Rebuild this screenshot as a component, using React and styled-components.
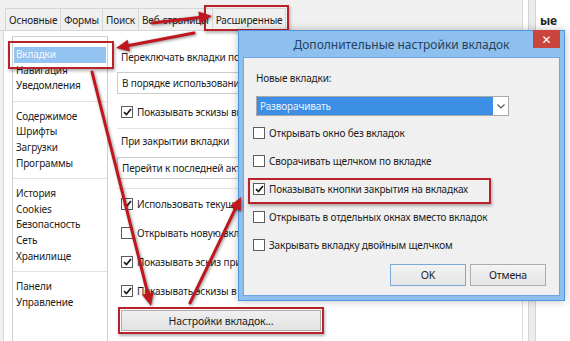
import React from 'react'
import styled, { createGlobalStyle } from 'styled-components'

const Global = createGlobalStyle`
  body { margin: 0; background: #fff; }
`

const RED = '#b8222a'

const Page = styled.div`
  position: relative;
  width: 570px;
  height: 341px;
  overflow: hidden;
  display: flex;
  background: #fff;
  font-family: "Noto Sans", "DejaVu Sans", sans-serif;
  font-size: 10px;
  letter-spacing: -0.15px;
  color: #1c1c1c;
`

const Window = styled.div`
  display: flex;
  width: 540px;
  height: 100%;
  background: #f0f0f0;
`

const Main = styled.div`
  display: flex;
  flex-direction: column;
  width: 523px;
`

const TabStrip = styled.div`
  display: flex;
  align-items: flex-end;
  height: 31px;
  padding-left: 5px;
  border-bottom: 1px solid #d6d6d6;
  box-sizing: border-box;
`

const Tab = styled.div`
  position: relative;
  display: flex;
  align-items: center;
  height: ${p => (p.$active ? 25 : 21)}px;
  padding: 0 ${p => (p.$active ? 9 : 3)}px;
  margin-left: ${p => (p.$active ? 3 : 0)}px;
  margin-bottom: ${p => (p.$active ? -1 : 0)}px;
  border: 1px solid #d6d6d6;
  border-bottom: none;
  margin-right: -1px;
  background: ${p => (p.$active ? '#fff' : '#f0f0f0')};
  font-size: ${p => (p.$active ? 10.5 : 10)}px;
`

const Marked = styled.div`
  position: relative;
  margin-top: ${p => p.$mt || 0}px;
  margin-left: ${p => p.$ml || 0}px;
  &::after {
    content: '';
    position: absolute;
    inset: ${p => p.$inset};
    border: 2px solid ${RED};
    box-shadow: 1px 2px 3px rgba(0, 0, 0, 0.3);
    pointer-events: none;
  }
`

const TabPage = styled.div`
  flex: 1;
  display: flex;
  min-height: 0;
  margin-left: 3px;
  padding: 5px 0 0 8px;
  background: #fff;
  border-left: 1px solid #d6d6d6;
`

const Sidebar = styled.div`
  width: 96px;
  padding-top: 10px;
  border: 1px solid #cfcfcf;
  border-bottom: none;
  box-sizing: border-box;
`

const Group = styled.div`
  padding: 0 1px 7px;
  border-bottom: 1px solid #e2e2e2;
  & + & { padding-top: 7px; }
  &:last-child { border-bottom: none; }
`

const Item = styled.div`
  height: 15.6px;
  line-height: 15.6px;
  padding-left: 2px;
  background: ${p => (p.$selected ? '#93c3f1' : 'transparent')};
  color: ${p => (p.$selected ? '#f5f9fd' : 'inherit')};
`

const Content = styled.div`
  flex: 1;
  display: flex;
  flex-direction: column;
  padding-left: 9px;
`

const Label = styled.div`
  height: 16px;
  line-height: 16px;
  padding-left: ${p => (p.$flush ? 0 : 4)}px;
  margin-top: ${p => p.$mt || 0}px;
  white-space: nowrap;
`

const Select = styled.div`
  display: flex;
  align-items: center;
  width: ${p => p.$w}px;
  height: ${p => p.$h}px;
  margin-top: ${p => p.$mt}px;
  padding-left: 4px;
  border: 1px solid #cbcbcb;
  background: #fff;
  box-sizing: border-box;
  white-space: nowrap;
`

const Separator = styled.div`
  height: 1px;
  width: 320px;
  margin-top: ${p => p.$mt}px;
  background: #e2e2e2;
`

const Row = styled.div`
  display: flex;
  align-items: center;
  gap: 4px;
  height: 16px;
  margin-top: ${p => p.$mt}px;
  margin-left: ${p => p.$ml || 0}px;
  padding-left: ${p => p.$pl || 0}px;
  white-space: nowrap;
`

const Box = styled.span`
  display: flex;
  align-items: center;
  justify-content: center;
  width: 12px;
  height: 12px;
  flex-shrink: 0;
  border: 1px solid #5c5c5c;
  background: #fff;
  box-sizing: border-box;
`

const BigButton = styled.div`
  display: flex;
  align-items: center;
  justify-content: center;
  width: 198px;
  height: 19px;
  border: 1px solid #adadad;
  background: linear-gradient(#f0f0f0, #e2e2e2);
  font-size: 10.5px;
`

const Scrollbar = styled.div`
  width: 17px;
  background: #fff;
  display: flex;
  justify-content: center;
  border-left: 1px solid #dcdcdc;
  &::before {
    content: '';
    width: 6px;
    border-left: 1px solid #d4d4d4;
    border-right: 1px solid #d4d4d4;
    background: #ececec;
  }
`

const Aside = styled.div`
  flex: 1;
  padding: 12px 0 0 0;
  font-weight: bold;
  font-size: 12px;
  color: #222;
`

const Dialog = styled.div`
  position: absolute;
  left: 238px;
  top: 30px;
  width: 327px;
  height: 271px;
  display: flex;
  flex-direction: column;
  background: #8ec0ef;
  border: 1px solid #4f95de;
  box-sizing: border-box;
  padding: 0 4px 4px;
  box-shadow: 0 0 8px rgba(0, 0, 0, 0.25);
`

const TitleBar = styled.div`
  position: relative;
  display: flex;
  align-items: center;
  justify-content: center;
  height: 26px;
  font-size: 12px;
  letter-spacing: 0;
  color: #27405e;
`

const Close = styled.div`
  position: absolute;
  right: 0;
  top: -1px;
  width: 27px;
  height: 18px;
  display: flex;
  align-items: center;
  justify-content: center;
  background: #c9443d;
  color: #fff;
  font-size: 12px;
  font-weight: bold;
`

const DialogBody = styled.div`
  flex: 1;
  display: flex;
  flex-direction: column;
  padding: 12px 13px 0 12px;
  background: #f0f0f0;
  border: 1px solid #6ea8e4;
`

const BlueSelect = styled.div`
  display: flex;
  width: 253px;
  height: 20px;
  margin-top: 10px;
  border: 1px solid #a9a9a9;
  box-sizing: border-box;
  background: #fff;
`

const BlueValue = styled.div`
  flex: 1;
  display: flex;
  align-items: center;
  padding-left: 3px;
  background: #3d8fe6;
  color: #eaf3fd;
`

const Chevron = styled.div`
  width: 15px;
  display: flex;
  align-items: center;
  justify-content: center;
`

const Buttons = styled.div`
  display: flex;
  justify-content: flex-end;
  gap: 4px;
  margin-top: 11px;
`

const Button = styled.div`
  width: ${p => p.$w}px;
  height: 22px;
  display: flex;
  align-items: center;
  justify-content: center;
  border: 1px solid ${p => (p.$primary ? '#7aa7d6' : '#adadad')};
  background: linear-gradient(#f3f3f3, #e5e5e5);
  box-sizing: border-box;
  font-size: 10.5px;
`

const Arrows = styled.svg`
  position: absolute;
  inset: 0;
  pointer-events: none;
  filter: drop-shadow(1px 1px 1.5px rgba(0, 0, 0, 0.45));
`

const Check = () => (
  <svg width="9" height="8" viewBox="0 0 9 8">
    <path d="M1 4.2 L3.5 6.6 L8 1" fill="none" stroke="#1a1a1a" strokeWidth="1.7" />
  </svg>
)

const CheckRow = ({ checked, children, mt, pl, ml }) => (
  <Row $mt={mt} $pl={pl} $ml={ml}>
    <Box>{checked && <Check />}</Box>
    <span>{children}</span>
  </Row>
)

const Arrow = ({ x1, y1, x2, y2 }) => {
  const a = Math.atan2(y2 - y1, x2 - x1)
  const len = 13
  const w = 6
  const bx = x2 - len * Math.cos(a)
  const by = y2 - len * Math.sin(a)
  const px = -Math.sin(a) * w
  const py = Math.cos(a) * w
  return (
    <g>
      <line x1={x1} y1={y1} x2={bx} y2={by} stroke="#c0161e" strokeWidth="3" strokeLinecap="round" />
      <polygon points={`${x2},${y2} ${bx + px},${by + py} ${bx - px},${by - py}`} fill="#c0161e" />
    </g>
  )
}

const groups = [
  ['Вкладки', 'Навигация', 'Уведомления'],
  ['Содержимое', 'Шрифты', 'Загрузки', 'Программы'],
  ['История', 'Cookies', 'Безопасность', 'Сеть', 'Хранилище'],
  ['Панели', 'Управление'],
]

const dialogRows = [
  { text: 'Открывать окно без вкладок' },
  { text: 'Сворачивать щелчком по вкладке' },
  { text: 'Показывать кнопки закрытия на вкладках', checked: true, marked: true },
  { text: 'Открывать в отдельных окнах вместо вкладок' },
  { text: 'Закрывать вкладку двойным щелчком' },
]

export default function App() {
  return (
    <>
      <Global />
      <Page>
        <Window>
          <Main>
            <TabStrip>
              <Tab>Основные</Tab>
              <Tab>Формы</Tab>
              <Tab>Поиск</Tab>
              <Tab>Веб-страницы</Tab>
              <Marked as={Tab} $active $inset="-4px -4px -1px -9px">Расширенные</Marked>
            </TabStrip>
            <TabPage>
              <Sidebar>
                {groups.map((g, gi) => (
                  <Group key={gi}>
                    {g.map(name =>
                      name === 'Вкладки' ? (
                        <Marked key={name} $inset="-6px -8px -6px -6px">
                          <Item $selected>{name}</Item>
                        </Marked>
                      ) : (
                        <Item key={name}>{name}</Item>
                      )
                    )}
                  </Group>
                ))}
              </Sidebar>
              <Content>
                <Label $mt={13}>Переключать вкладки по</Label>
                <Select $w={300} $h={22} $mt={7}>В порядке использования</Select>
                <CheckRow checked mt={10} pl={4}>Показывать эскизы вкладок</CheckRow>
                <Separator $mt={8} />
                <Label $mt={4}>При закрытии вкладки</Label>
                <Select $w={300} $h={22} $mt={8}>Перейти к последней активной</Select>
                <Separator $mt={9} />
                <CheckRow checked mt={7} pl={4}>Использовать текущую</CheckRow>
                <CheckRow mt={13} pl={4}>Открывать новую вкладку</CheckRow>
                <CheckRow checked mt={13} pl={4}>Показывать эскиз при</CheckRow>
                <CheckRow checked mt={13} pl={4}>Показывать эскизы в</CheckRow>
                <Marked $mt={11} $ml={4} $inset="-3px -3px -3px -3px" style={{ width: 'fit-content' }}>
                  <BigButton>Настройки вкладок...</BigButton>
                </Marked>
              </Content>
            </TabPage>
          </Main>
          <Scrollbar />
        </Window>
        <Aside>ые</Aside>

        <Dialog>
          <TitleBar>
            Дополнительные настройки вкладок
            <Close>✕</Close>
          </TitleBar>
          <DialogBody>
            <Label $flush>Новые вкладки:</Label>
            <BlueSelect>
              <BlueValue>Разворачивать</BlueValue>
              <Chevron>
                <svg width="8" height="5" viewBox="0 0 8 5">
                  <path d="M0.5 0.5 L4 4 L7.5 0.5" fill="none" stroke="#555" strokeWidth="1.2" />
                </svg>
              </Chevron>
            </BlueSelect>
            {dialogRows.map((r, i) =>
              r.marked ? (
                <Marked key={i} $mt={12} $inset="-3px 55px -7px -8px">
                  <CheckRow checked mt={0} ml={-3}>{r.text}</CheckRow>
                </Marked>
              ) : (
                <CheckRow key={i} checked={r.checked} mt={i === 0 ? 9 : 12} ml={-3}>{r.text}</CheckRow>
              )
            )}
            <Buttons>
              <Button $w={76} $primary>OK</Button>
              <Button $w={76}>Отмена</Button>
            </Buttons>
          </DialogBody>
        </Dialog>

        <Arrows width="570" height="341" viewBox="0 0 570 341">
          <Arrow x1={152} y1={23} x2={212} y2={16} />
          <Arrow x1={194} y1={33} x2={116} y2={48} />
          <Arrow x1={92} y1={72} x2={151} y2={306} />
          <Arrow x1={190} y1={303} x2={241} y2={197} />
        </Arrows>
      </Page>
    </>
  )
}
